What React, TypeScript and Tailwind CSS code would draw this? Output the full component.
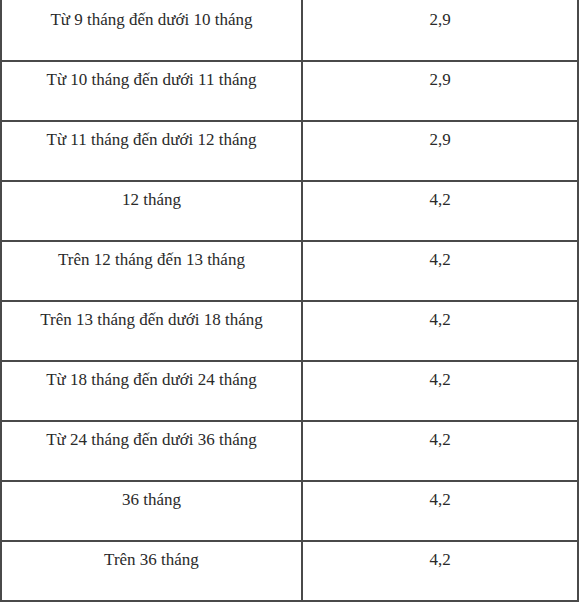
const rows: [string, string][] = [
  ["Từ 9 tháng đến dưới 10 tháng", "2,9"],
  ["Từ 10 tháng đến dưới 11 tháng", "2,9"],
  ["Từ 11 tháng đến dưới 12 tháng", "2,9"],
  ["12 tháng", "4,2"],
  ["Trên 12 tháng đến 13 tháng", "4,2"],
  ["Trên 13 tháng đến dưới 18 tháng", "4,2"],
  ["Từ 18 tháng đến dưới 24 tháng", "4,2"],
  ["Từ 24 tháng đến dưới 36 tháng", "4,2"],
  ["36 tháng", "4,2"],
  ["Trên 36 tháng", "4,2"],
];

export default function App() {
  return (
    <div className="w-[580px] h-[605px] bg-white overflow-hidden font-['Liberation_Serif'] text-[17px] text-[#2a2a2a]">
      <div className="w-[579px] border-l-2 border-r-2 border-[#4a4a4a]">
        {rows.map(([label, value], i) => (
          <div
            key={label}
            className={`grid grid-cols-[301px_1fr] border-b-2 border-[#4a4a4a] ${i === 0 ? "h-[62px]" : "h-[60px]"}`}
          >
            <div className={`border-r-2 border-[#4a4a4a] text-center ${i === 0 ? "pt-[7px]" : "pt-[5px]"}`}>
              {label}
            </div>
            <div className={`text-center ${i === 0 ? "pt-[7px]" : "pt-[5px]"}`}>{value}</div>
          </div>
        ))}
      </div>
    </div>
  );
}
